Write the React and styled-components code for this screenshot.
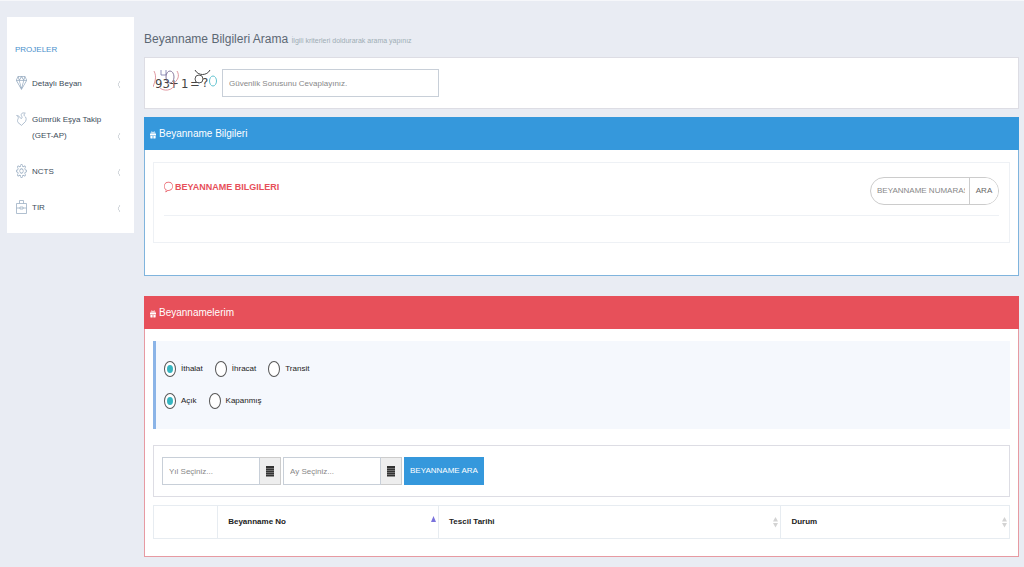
import React, {useState} from 'react';
import styled, {createGlobalStyle} from 'styled-components';
import {SlDiamond, SlSettings, SlBubble, SlArrowLeft} from 'react-icons/sl';
import {FaGift} from 'react-icons/fa';

const GlobalStyle = createGlobalStyle`
  * {
    box-sizing: border-box;
  }

  body {
    margin: 0;
    background: #e9ecf3;
    color: #333333;
    font-family: 'Liberation Sans Narrow', 'Liberation Sans', sans-serif;
    font-size: 8px;
    line-height: 16px;
  }

  input,
  button {
    font-family: inherit;
    font-size: 8px;
    line-height: 16px;
  }
`;

const Page = styled.div`
  display: flex;
  align-items: flex-start;
  gap: 10px;
  padding: 16px 5px 10px 7px;
  border-top: 1px solid #f6f7fa;
`;

const Sidebar = styled.nav`
  flex: 0 0 127px;
  padding: 25px 8px 7px;
  background: #ffffff;
`;

const SidebarTitle = styled.h3`
  margin: 0 0 8px;
  color: #4a90cc;
  font-size: 8px;
  font-weight: 400;
  line-height: 16px;
`;

const MenuList = styled.ul`
  margin: 0;
  padding: 0;
  list-style: none;
`;

const MenuLink = styled.a`
  display: flex;
  align-items: flex-end;
  gap: 4px;
  padding: 10px 5px 10px 1px;
  color: #3c4c5a;
  text-decoration: none;
`;

const MenuIcon = styled.span`
  display: flex;
  align-self: flex-start;
  width: 12px;
  height: 16px;
  color: #9db0c4;

  svg {
    width: 11px;
    height: 14px;
  }
`;

const MenuText = styled.span`
  flex: 1;
  padding-right: 8px;
`;

const Arrow = styled.span`
  display: flex;
  align-items: center;
  height: 16px;
  color: #9aa4af;

  svg {
    width: 4px;
    height: 7px;
  }
`;

const Content = styled.main`
  flex: 1;
  min-width: 0;
`;

const PageTitle = styled.h1`
  margin: 12px 0 6px;
  color: #5c6873;
  font-size: 12px;
  font-weight: 400;
  line-height: 20px;

  small {
    color: #9eacb4;
    font-size: 7px;
  }
`;

const Box = styled.div`
  display: flex;
  align-items: center;
  gap: 2px;
  padding: 11px 8px;
  background: #ffffff;
  border: 1px solid #dddde4;
`;

const Captcha = styled.svg`
  flex: none;
  margin-right: 3px;
`;

const TextInput = styled.input`
  width: ${props => props.$width};
  height: 28px;
  padding: 4px 6px;
  border: 1px solid #c8cfd8;
  border-radius: 0;
  background: #ffffff;
  color: #555555;

  &::placeholder {
    color: #888888;
    opacity: 1;
  }
`;

const Portlet = styled.section`
  margin-top: ${props => props.$gap};
  background: #ffffff;
  border: 1px solid ${props => props.$line};
`;

const PortletTitle = styled.h2`
  display: flex;
  align-items: center;
  gap: 3px;
  margin: -1px -1px 0;
  padding: 0 6px;
  height: 33px;
  background: ${props => props.$color};
  color: #ffffff;
  font-size: 10px;
  font-weight: 400;

  svg {
    width: 6px;
    height: 8px;
    margin-top: 3px;
  }
`;

const PortletBody = styled.div`
  padding: 12px 8px ${props => props.$bottom};
`;

const Panel = styled.div`
  padding: 14px 10px 26px;
  border: 1px solid #eef1f5;
`;

const PanelHead = styled.div`
  display: flex;
  align-items: flex-start;
  justify-content: space-between;
  padding-bottom: 10px;
  border-bottom: 1px solid #eef1f5;
`;

const PanelCaption = styled.h4`
  display: flex;
  align-items: center;
  gap: 2px;
  margin: 2px 0 0;
  color: #e7505a;
  font-size: 9px;
  font-weight: 700;

  svg {
    width: 9px;
    height: 12px;
  }
`;

const SearchGroup = styled.form`
  display: flex;
  width: 129px;
  height: 28px;
  border: 1px solid #cccccc;
  border-radius: 14px;
  overflow: hidden;
`;

const SearchInput = styled.input`
  flex: 1;
  min-width: 0;
  padding: 0 4px 0 6px;
  border: 0;
  background: transparent;

  &::placeholder {
    color: #888888;
    opacity: 1;
  }
`;

const SearchButton = styled.button`
  width: 29px;
  padding: 0;
  border: 0;
  border-left: 1px solid #cccccc;
  background: #ffffff;
  color: #666666;
`;

const Note = styled.div`
  padding: 12px 8px;
  margin-bottom: 16px;
  border-left: 3px solid #8bb4e7;
  background: #f5f8fd;
`;

const RadioRow = styled.fieldset`
  display: flex;
  align-items: center;
  gap: 12px;
  margin: 0;
  padding: 0;
  height: 32px;
  border: 0;
`;

const RadioLabel = styled.label`
  display: flex;
  align-items: center;
  gap: 5px;
  color: #222222;
`;

const Radio = styled.input`
  appearance: none;
  display: grid;
  place-items: center;
  width: 12px;
  height: 16px;
  margin: 0;
  border: 1px solid #555555;
  border-radius: 50%;
  background: #ffffff;

  &:checked::before {
    content: '';
    width: 6px;
    height: 8px;
    border-radius: 50%;
    background: #36b5c0;
  }
`;

const DateGroup = styled.div`
  display: flex;
`;

const DateButton = styled.button`
  display: flex;
  align-items: center;
  justify-content: center;
  width: 21px;
  height: 28px;
  padding: 0;
  border: 1px solid #cccccc;
  border-left: 0;
  background: #eeeeee;
`;

const PrimaryButton = styled.button`
  height: 28px;
  padding: 0 6px;
  border: 0;
  background: #3598dc;
  color: #ffffff;
`;

const Table = styled.table`
  width: 100%;
  margin-top: 8px;
  border-collapse: collapse;
  table-layout: fixed;
`;

const Th = styled.th`
  width: ${props => props.$width};
  height: 33px;
  padding: 0 2px 0 10px;
  border: 1px solid #e7ecf1;
  color: #222222;
  font-weight: 700;
  text-align: left;
`;

const ThInner = styled.div`
  display: flex;
  align-items: center;
  justify-content: space-between;
`;

const MENU = [
  {name: 'Detaylı Beyan', icon: 'diamond'},
  {name: 'Gümrük Eşya Takip (GET-AP)', icon: 'fire'},
  {name: 'NCTS', icon: 'settings'},
  {name: 'TIR', icon: 'case'},
];

const FireIcon = () => (
  <svg viewBox="0 0 11 14" fill="none" stroke="currentColor">
    <path
      strokeWidth="0.8"
      d="M.6 3.500C2 4 2.500 5 2.200 6.500 1.500 8 1.200 9 2 10.500L5.500 13.400 9.500 9.500C10.800 7 10 5 8.500 4c-.8-.8-.5-2 .8-2.800C7.500.5 5.500 1 5.200 2.500 5 4 6.500 4.500 6 6 5.500 7 4.500 6.500 4 5.500 3.500 4.300 2 3.500.6 3.500Z"
    />
  </svg>
);

const CaseIcon = () => (
  <svg viewBox="0 0 11 14" fill="none" stroke="currentColor">
    <path
      strokeWidth="0.8"
      d="M.5 3.500h10v10H.5zM3.500 3.500v-3h4v3M.5 8H4M7 8h3.500M4 7h3v2H4z"
    />
  </svg>
);

const menuIcons = {
  diamond: <SlDiamond preserveAspectRatio="none" />,
  fire: <FireIcon />,
  settings: <SlSettings preserveAspectRatio="none" />,
  case: <CaseIcon />,
};

const CalendarIcon = () => (
  <svg width="8" height="12" viewBox="0 0 8 12">
    <path fill="#333333" d="M0 1h8v10.500H0z" />
    <path stroke="#999999" strokeWidth="0.6" d="M0 3.500h8M0 5.500h8M0 7.500h8M0 9.500h8" />
  </svg>
);

const SortIcon = ({active}) => (
  <svg width="5" height="16" viewBox="0 0 5 16">
    {active ? (
      <path fill="#7a72dc" d="M2.500 2 5 8H0z" />
    ) : (
      <path fill="#d3d3d3" d="M2.500 3 5 7.500H0zM2.500 13.500 5 9H0z" />
    )}
  </svg>
);

const RadioOptions = ({name, legend, options}) => {
  const [value, setValue] = useState(options[0]);

  return (
    <RadioRow aria-label={legend}>
      {options.map(option => (
        <RadioLabel key={option}>
          <Radio
            type="radio"
            name={name}
            checked={value === option}
            onChange={() => setValue(option)}
          />
          {option}
        </RadioLabel>
      ))}
    </RadioRow>
  );
};

const DatePicker = ({label}) => (
  <DateGroup>
    <TextInput $width="98px" placeholder={label} aria-label={label} />
    <DateButton type="button" aria-label={label}>
      <CalendarIcon />
    </DateButton>
  </DateGroup>
);

const App = () => (
  <>
    <GlobalStyle />
    <Page>
      <Sidebar>
        <SidebarTitle>PROJELER</SidebarTitle>
        <MenuList>
          {MENU.map(item => (
            <li key={item.name}>
              <MenuLink href="#">
                <MenuIcon>{menuIcons[item.icon]}</MenuIcon>
                <MenuText>{item.name}</MenuText>
                <Arrow>
                  <SlArrowLeft preserveAspectRatio="none" />
                </Arrow>
              </MenuLink>
            </li>
          ))}
        </MenuList>
      </Sidebar>
      <Content>
        <PageTitle>
          Beyanname Bilgileri Arama <small>İlgili kriterleri doldurarak arama yapınız</small>
        </PageTitle>
        <Box>
          <Captcha width="64" height="28" viewBox="0 0 64 28" fill="none">
            <g fill="#444444" fontFamily="'DejaVu Sans Condensed', 'DejaVu Sans'" fontSize="13">
              <text x="2" y="19">93</text>
              <text x="16" y="19">+</text>
              <text x="28" y="19">1</text>
              <text x="37" y="19">=</text>
              <text x="49" y="18">?</text>
            </g>
            <path stroke="#d8808c" strokeWidth="0.8" d="M1 2c3 6 1 10-1 16M6 18c4 5 14 4 16-3M24 2c3 5 1 9-4 13" />
            <path stroke="#7777a8" strokeWidth="0.8" d="M8 1v5h5V1" />
            <ellipse cx="17" cy="8" rx="4" ry="6" stroke="#6c5c88" strokeWidth="0.8" />
            <path stroke="#444444" d="M42 1c3 6 12 6 15 0" />
            <ellipse cx="46" cy="10" rx="4" ry="4" stroke="#555555" />
            <ellipse cx="60" cy="12" rx="3.500" ry="5" stroke="#62c3d0" />
          </Captcha>
          <TextInput
            $width="217px"
            placeholder="Güvenlik Sorusunu Cevaplayınız."
            aria-label="Güvenlik Sorusu"
          />
        </Box>

        <Portlet $line="#7fb4dd" $gap="8px">
          <PortletTitle $color="#3598dc">
            <FaGift preserveAspectRatio="none" />
            Beyanname Bilgileri
          </PortletTitle>
          <PortletBody $bottom="32px">
            <Panel>
              <PanelHead>
                <PanelCaption>
                  <SlBubble preserveAspectRatio="none" />
                  BEYANNAME BILGILERI
                </PanelCaption>
                <SearchGroup>
                  <SearchInput placeholder="BEYANNAME NUMARASI" aria-label="Beyanname numarası" />
                  <SearchButton type="button">ARA</SearchButton>
                </SearchGroup>
              </PanelHead>
            </Panel>
          </PortletBody>
        </Portlet>

        <Portlet $line="#e79aa2" $gap="20px">
          <PortletTitle $color="#e7505a">
            <FaGift preserveAspectRatio="none" />
            Beyannamelerim
          </PortletTitle>
          <PortletBody $bottom="17px">
            <Note>
              <RadioOptions name="rejim" legend="Rejim" options={['İthalat', 'İhracat', 'Transit']} />
              <RadioOptions name="durum" legend="Durum" options={['Açık', 'Kapanmış']} />
            </Note>
            <Box>
              <DatePicker label="Yıl Seçiniz..." />
              <DatePicker label="Ay Seçiniz..." />
              <PrimaryButton type="button">BEYANNAME ARA</PrimaryButton>
            </Box>
            <Table>
              <thead>
                <tr>
                  <Th $width="7.5%" />
                  <Th $width="25.8%">
                    <ThInner>
                      Beyanname No
                      <SortIcon active />
                    </ThInner>
                  </Th>
                  <Th $width="40%">
                    <ThInner>
                      Tescil Tarihi
                      <SortIcon />
                    </ThInner>
                  </Th>
                  <Th>
                    <ThInner>
                      Durum
                      <SortIcon />
                    </ThInner>
                  </Th>
                </tr>
              </thead>
            </Table>
          </PortletBody>
        </Portlet>
      </Content>
    </Page>
  </>
);

export default App;
